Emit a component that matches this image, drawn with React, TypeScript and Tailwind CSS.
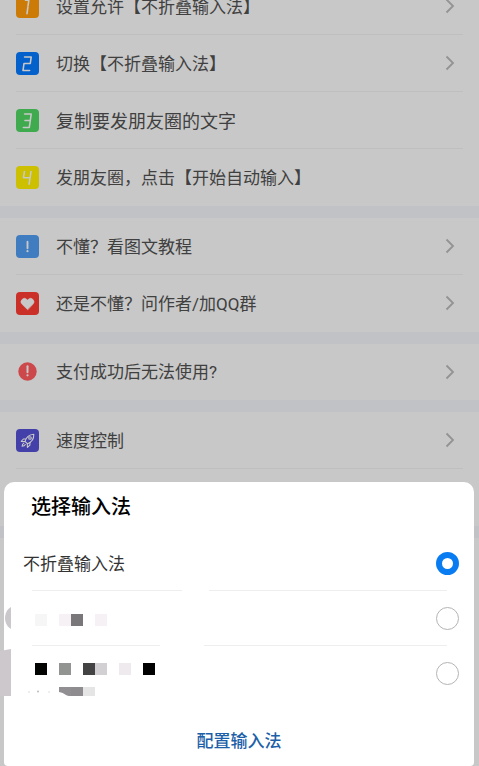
import { useState } from "react";
import type { ReactNode } from "react";

interface MenuItem {
  label: string;
  icon: ReactNode;
  arrow?: boolean;
  large?: boolean;
}

interface BadgeProps {
  className: string;
  children: ReactNode;
}

function Badge({ className, children }: BadgeProps) {
  return (
    <span className={`block size-[23px] shrink-0 ${className}`}>
      <svg
        viewBox="0 0 23 23"
        className="size-full"
        fill="none"
        stroke="currentColor"
        strokeWidth="1.6"
        strokeLinecap="round"
        strokeLinejoin="round"
        aria-hidden="true"
      >
        {children}
      </svg>
    </span>
  );
}

function ExclamationMark() {
  return (
    <>
      <path d="M11.5 6.8v6.4" strokeWidth="1.9" />
      <circle cx="11.5" cy="16.2" r="1.1" fill="currentColor" stroke="none" />
    </>
  );
}

const groups: MenuItem[][] = [
  [
    {
      label: "设置允许【不折叠输入法】",
      arrow: true,
      icon: (
        <Badge className="rounded bg-[#ff9b08] text-[#fafafa]">
          <path d="M9.5 5.2h3.3l-.8 6M11.9 12.2l-.9 6.4" />
        </Badge>
      ),
    },
    {
      label: "切换【不折叠输入法】",
      arrow: true,
      icon: (
        <Badge className="rounded bg-[#0678fe] text-[#fafafa]">
          <path d="M8.6 5h6.6l-.9 6.5H8l-1 7h6.6" />
        </Badge>
      ),
    },
    {
      label: "复制要发朋友圈的文字",
      large: true,
      icon: (
        <Badge className="rounded bg-[#50d562] text-[#fafafa]">
          <path d="M8.6 5h6.6l-.9 6.5H9M14.3 11.5l-1 7H7.4" />
        </Badge>
      ),
    },
    {
      label: "发朋友圈，点击【开始自动输入】",
      icon: (
        <Badge className="rounded bg-[#fff000] text-[#fafafa]">
          <path d="M8.4 5.5l-.9 6.2h6.4M15 5.5l-1.9 12.7" />
        </Badge>
      ),
    },
  ],
  [
    {
      label: "不懂？看图文教程",
      arrow: true,
      icon: (
        <Badge className="rounded bg-[#4f9bf0] text-[#fafafa]">
          <ExclamationMark />
        </Badge>
      ),
    },
    {
      label: "还是不懂？问作者/加QQ群",
      arrow: true,
      icon: (
        <Badge className="rounded bg-[#fe3c32] text-[#fafafa]">
          <path
            d="M11.5 17.6 6.1 12.3a3.3 3.3 0 0 1 4.7-4.9l.7.7.7-.7a3.3 3.3 0 0 1 4.7 4.9z"
            fill="currentColor"
            strokeWidth="0.6"
          />
        </Badge>
      ),
    },
  ],
  [
    {
      label: "支付成功后无法使用?",
      arrow: true,
      icon: (
        <Badge className="text-[#fafafa]">
          <circle cx="11.5" cy="11.5" r="9.2" fill="#ff5b5e" stroke="none" />
          <path d="M11.5 6.3v6" strokeWidth="2" />
          <circle cx="11.5" cy="15.3" r="1.1" fill="currentColor" stroke="none" />
        </Badge>
      ),
    },
  ],
  [
    {
      label: "速度控制",
      arrow: true,
      icon: (
        <Badge className="rounded bg-[#5550d4] text-[#fafafa]">
          <g strokeWidth="1.1">
            <path d="M9 12.4c1-3.7 3.6-6.8 8.8-7.2.2 5-2.4 8-6.3 9.6z" />
            <path d="M9.8 10H7.4l-2.2 2.4 3.8.2M13.9 13.6v2.6L11.4 18.4l-.1-3.6" />
            <path d="M7.8 14.2c-1.2.4-1.6 1.8-1.7 3 1.3 0 2.6-.4 3.2-1.6" />
            <circle cx="14" cy="9" r="1.3" />
          </g>
        </Badge>
      ),
    },
    { label: "", icon: null },
  ],
  [],
];

function Chevron() {
  return (
    <svg
      viewBox="0 0 10 16"
      className="ml-auto h-4 w-2.5 shrink-0 text-[#b8b8b8]"
      fill="none"
      stroke="currentColor"
      strokeWidth="1.8"
      aria-hidden="true"
    >
      <path d="M1.5 1.5 8 8l-6.5 6.5" />
    </svg>
  );
}

function MenuRow({ item }: { item: MenuItem }) {
  if (!item.label) {
    return <div className="h-[57px]" />;
  }
  return (
    <button
      type="button"
      className="flex h-[57px] w-full items-center gap-[17px] border-b border-[#efefef] pr-2 text-left only:h-14 last:border-transparent"
    >
      {item.icon}
      <span className={item.large ? "pt-[3px] text-[18px]" : "pt-[3px] text-[17px]"}>
        {item.label}
      </span>
      {item.arrow && <Chevron />}
    </button>
  );
}

interface Block {
  x: number;
  fill: string;
}

// Names of the other keyboards are masked with 12px blocks
const secondName: Block[] = [
  { x: 0, fill: "#f7f6f7" },
  { x: 24, fill: "#f6f1f5" },
  { x: 36, fill: "#7a777b" },
  { x: 60, fill: "#f5f1f5" },
];

const thirdName: Block[] = [
  { x: 0, fill: "#020402" },
  { x: 24, fill: "#929492" },
  { x: 48, fill: "#434343" },
  { x: 60, fill: "#d2d0d2" },
  { x: 84, fill: "#eeeaee" },
  { x: 108, fill: "#000000" },
];

function MaskedName({ blocks }: { blocks: Block[] }) {
  return (
    <svg width="120" height="12" className="ml-3" aria-hidden="true">
      {blocks.map((b) => (
        <rect key={b.x} x={b.x} width="12" height="12" fill={b.fill} />
      ))}
    </svg>
  );
}

function MaskedSubtitle() {
  return (
    <svg width="76" height="9" className="mt-3 ml-1" aria-hidden="true">
      <path d="M32 0h12v9h-2c-3 0-4-3-10-4z" fill="#918f92" />
      <rect x="44" width="12" height="9" fill="#8f8c8f" />
      <rect x="56" width="12" height="9" fill="#e6e5e6" />
      <circle cx="2" cy="5" r="0.8" fill="#d8d4d8" />
      <circle cx="11" cy="4.5" r="1" fill="#bdb9bd" />
      <circle cx="22" cy="5" r="0.8" fill="#dcd8dc" />
    </svg>
  );
}

interface KeyboardOptionProps {
  value: string;
  selected: string;
  label: string;
  onSelect: (value: string) => void;
  children: ReactNode;
}

function KeyboardOption({
  value,
  selected,
  label,
  onSelect,
  children,
}: KeyboardOptionProps) {
  return (
    <label className="flex h-[54px] items-center justify-between pr-[15px] pl-[19px]">
      {children}
      <input
        type="radio"
        name="keyboard"
        value={value}
        aria-label={label}
        checked={selected === value}
        onChange={() => onSelect(value)}
        className="size-[23px] shrink-0 appearance-none rounded-full border border-[#b4b4b4] bg-white checked:border-6 checked:border-[#0a7cf2]"
      />
    </label>
  );
}

function SplitDivider({ className }: { className: string }) {
  return (
    <div className="flex h-px pr-[27px] pl-7">
      <span className={`bg-[#eeeeee] ${className}`} />
      <span className="flex-1 bg-[#eeeeee]" />
    </div>
  );
}

export default function App() {
  const [keyboard, setKeyboard] = useState("unfold");

  return (
    <div className="min-h-screen overflow-hidden bg-[#fafafa] font-[Roboto,'Noto_Sans_CJK_SC',sans-serif] text-[#505050]">
      {/* Settings list, scrolled down a little */}
      <main className="-mt-[22px] divide-y-12 divide-[#f1f3f8]">
        {groups.map((items, i) => (
          <section key={i} className="px-4">
            {items.map((item) => (
              <MenuRow key={item.label} item={item} />
            ))}
          </section>
        ))}
      </main>

      <div className="fixed inset-0 bg-black/20" />

      {/* Keyboard picker */}
      <div
        role="dialog"
        aria-labelledby="picker-title"
        className="fixed inset-x-0 bottom-0 mr-[5px] ml-1 rounded-t-[10px] rounded-b bg-white"
      >
        <h2
          id="picker-title"
          className="h-[54px] pt-[9px] pl-[27px] text-[20px] leading-8 font-medium text-black"
        >
          选择输入法
        </h2>

        <KeyboardOption
          value="unfold"
          label="不折叠输入法"
          selected={keyboard}
          onSelect={setKeyboard}
        >
          <span className="pt-[3px] text-[17px] text-[#333333]">
            不折叠输入法
          </span>
        </KeyboardOption>
        <SplitDivider className="mr-[27px] w-[150px]" />
        <KeyboardOption
          value="second"
          label="输入法 2"
          selected={keyboard}
          onSelect={setKeyboard}
        >
          <span className="pt-1">
            <MaskedName blocks={secondName} />
          </span>
        </KeyboardOption>
        <SplitDivider className="mr-11 w-32" />
        <KeyboardOption
          value="third"
          label="输入法 3"
          selected={keyboard}
          onSelect={setKeyboard}
        >
          <span className="flex flex-col pt-3">
            <MaskedName blocks={thirdName} />
            <MaskedSubtitle />
          </span>
        </KeyboardOption>

        <button
          type="button"
          className="mt-4 block h-[50px] w-full pt-0.5 text-center text-[17px] font-medium text-[#1d5fa8]"
        >
          配置输入法
        </button>

        {/* Grey marks over the left edge of the sheet */}
        <svg
          width="11"
          height="90"
          className="absolute bottom-[70px] -left-1"
          aria-hidden="true"
        >
          <path d="M11 1v22C7 21 5 16 5 12S7 3 11 1z" fill="#cac8cb" />
          <path d="M0 45l11-2v47H0z" fill="#ccc8cc" />
        </svg>
      </div>
    </div>
  );
}
